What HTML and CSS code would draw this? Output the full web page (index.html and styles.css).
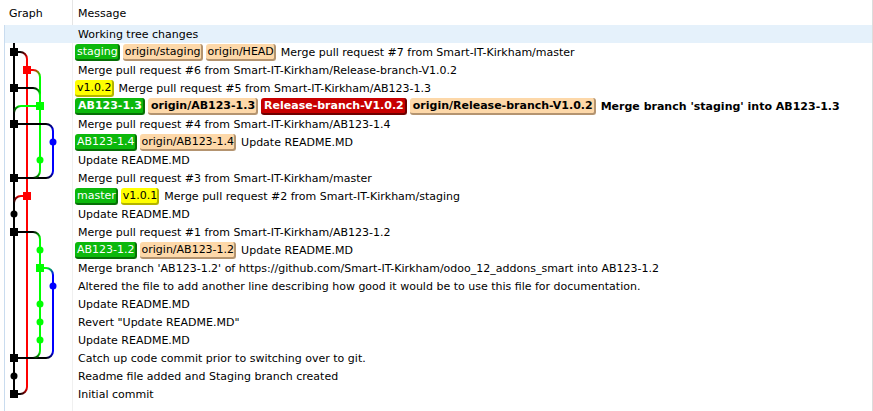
FILE: index.html
```html
<!DOCTYPE html>
<html>
<head>
<meta charset="utf-8">
<link rel="stylesheet" href="styles.css">
</head>
<body>
<div class="list">
  <div class="header">
    <div class="h-graph">Graph</div>
    <div class="h-msg">Message</div>
  </div>
  <div class="body">
    <div class="row selected"><span class="sel-msg">Working tree changes</span></div>
    <div class="grid">
      <div class="gcol">
        <svg class="graph" width="67" height="368" viewBox="0 0 67 368">
          <defs>
            <linearGradient id="gKR" x1="0" y1="0" x2="1" y2="1"><stop offset="0" stop-color="#000"/><stop offset="1" stop-color="#f00"/></linearGradient>
            <linearGradient id="gRG" x1="0" y1="0" x2="1" y2="1"><stop offset="0" stop-color="#f00"/><stop offset="1" stop-color="#0f0"/></linearGradient>
            <linearGradient id="gKG" x1="0" y1="0" x2="1" y2="1"><stop offset="0" stop-color="#000"/><stop offset="1" stop-color="#0f0"/></linearGradient>
            <linearGradient id="gKB" x1="0" y1="0" x2="1" y2="1"><stop offset="0" stop-color="#000"/><stop offset="1" stop-color="#00f"/></linearGradient>
            <linearGradient id="gGB" x1="0" y1="0" x2="1" y2="1"><stop offset="0" stop-color="#0f0"/><stop offset="1" stop-color="#00f"/></linearGradient>
            <linearGradient id="gGK" x1="1" y1="0" x2="0" y2="1"><stop offset="0" stop-color="#0f0"/><stop offset="1" stop-color="#000"/></linearGradient>
            <linearGradient id="gBK" x1="1" y1="0" x2="0" y2="1"><stop offset="0" stop-color="#00f"/><stop offset="1" stop-color="#000"/></linearGradient>
            <linearGradient id="gRK" x1="1" y1="0" x2="0" y2="1"><stop offset="0" stop-color="#f00"/><stop offset="1" stop-color="#000"/></linearGradient>
          </defs>
          <g transform="translate(-5 -43)" fill="none" stroke-width="2">
            <path d="M27 59 V387" stroke="#f00"/>
            <path d="M40 77 V171 M40 239 V351" stroke="#0f0"/>
            <path d="M53 131 V171 M53 275 V351" stroke="#00f"/>
            <path d="M14 43 V394" stroke="#000"/>
            <path d="M27 70 H33 M27 196 H21" stroke="#f00"/>
            <path d="M40 106 H21 M40 268 H46" stroke="#0f0"/>
            <path d="M14 52 H20 M14 88 H33 M14 124 H46 M14 178 H33 M33 178 H46 M14 232 H33 M14 358 H46 M14 394 H20" stroke="#000"/>
            <path d="M20 52 A7 7 0 0 1 27 59" stroke="url(#gKR)"/>
            <path d="M33 70 A7 7 0 0 1 40 77" stroke="url(#gRG)"/>
            <path d="M33 88 A7 7 0 0 1 40 95" stroke="url(#gKG)"/>
            <path d="M21 106 A7 7 0 0 0 14 113" stroke="url(#gGK)"/>
            <path d="M46 124 A7 7 0 0 1 53 131" stroke="url(#gKB)"/>
            <path d="M40 171 A7 7 0 0 1 33 178" stroke="url(#gGK)"/>
            <path d="M53 171 A7 7 0 0 1 46 178" stroke="url(#gBK)"/>
            <path d="M21 196 A7 7 0 0 0 14 203" stroke="url(#gRK)"/>
            <path d="M33 232 A7 7 0 0 1 40 239" stroke="url(#gKG)"/>
            <path d="M46 268 A7 7 0 0 1 53 275" stroke="url(#gGB)"/>
            <path d="M40 351 A7 7 0 0 1 33 358" stroke="url(#gGK)"/>
            <path d="M53 351 A7 7 0 0 1 46 358" stroke="url(#gBK)"/>
            <path d="M27 387 A7 7 0 0 1 20 394" stroke="url(#gRK)"/>
          </g>
          <g transform="translate(-5 -43)" stroke="none">
            <g fill="#000">
              <rect x="10" y="48" width="8" height="8"/>
              <rect x="10" y="84" width="8" height="8"/>
              <rect x="10" y="120" width="8" height="8"/>
              <rect x="10" y="174" width="8" height="8"/>
              <circle cx="14" cy="214" r="3.5"/>
              <rect x="10" y="228" width="8" height="8"/>
              <rect x="10" y="354" width="8" height="8"/>
              <circle cx="14" cy="376" r="3.5"/>
              <rect x="10" y="390" width="8" height="8"/>
            </g>
            <g fill="#f00">
              <rect x="23" y="66" width="8" height="8"/>
              <rect x="23" y="192" width="8" height="8"/>
            </g>
            <g fill="#0f0">
              <rect x="36" y="102" width="8" height="8"/>
              <circle cx="40" cy="160" r="3.5"/>
              <circle cx="40" cy="250" r="3.5"/>
              <rect x="36" y="264" width="8" height="8"/>
              <circle cx="40" cy="304" r="3.5"/>
              <circle cx="40" cy="322" r="3.5"/>
              <circle cx="40" cy="340" r="3.5"/>
            </g>
            <g fill="#00f">
              <circle cx="53" cy="142" r="3.5"/>
              <circle cx="53" cy="286" r="3.5"/>
            </g>
          </g>
        </svg>
      </div>
      <div class="mcol">
        <div class="row"><span class="badge b-green">staging</span><span class="badge b-orange">origin/staging</span><span class="badge b-orange">origin/HEAD</span><span class="msg">Merge pull request #7 from Smart-IT-Kirkham/master</span></div>
        <div class="row"><span class="msg">Merge pull request #6 from Smart-IT-Kirkham/Release-branch-V1.0.2</span></div>
        <div class="row"><span class="badge b-yellow">v1.0.2</span><span class="msg">Merge pull request #5 from Smart-IT-Kirkham/AB123-1.3</span></div>
        <div class="row bold"><span class="badge b-green">AB123-1.3</span><span class="badge b-orange">origin/AB123-1.3</span><span class="badge b-red">Release-branch-V1.0.2</span><span class="badge b-orange">origin/Release-branch-V1.0.2</span><span class="msg">Merge branch 'staging' into AB123-1.3</span></div>
        <div class="row"><span class="msg">Merge pull request #4 from Smart-IT-Kirkham/AB123-1.4</span></div>
        <div class="row"><span class="badge b-green">AB123-1.4</span><span class="badge b-orange">origin/AB123-1.4</span><span class="msg">Update README.MD</span></div>
        <div class="row"><span class="msg">Update README.MD</span></div>
        <div class="row"><span class="msg">Merge pull request #3 from Smart-IT-Kirkham/master</span></div>
        <div class="row"><span class="badge b-green">master</span><span class="badge b-yellow">v1.0.1</span><span class="msg">Merge pull request #2 from Smart-IT-Kirkham/staging</span></div>
        <div class="row"><span class="msg">Update README.MD</span></div>
        <div class="row"><span class="msg">Merge pull request #1 from Smart-IT-Kirkham/AB123-1.2</span></div>
        <div class="row"><span class="badge b-green">AB123-1.2</span><span class="badge b-orange">origin/AB123-1.2</span><span class="msg">Update README.MD</span></div>
        <div class="row"><span class="msg">Merge branch 'AB123-1.2' of https://github.com/Smart-IT-Kirkham/odoo_12_addons_smart into AB123-1.2</span></div>
        <div class="row"><span class="msg">Altered the file to add another line describing how good it would be to use this file for documentation.</span></div>
        <div class="row"><span class="msg">Update README.MD</span></div>
        <div class="row"><span class="msg">Revert "Update README.MD"</span></div>
        <div class="row"><span class="msg">Update README.MD</span></div>
        <div class="row"><span class="msg">Catch up code commit prior to switching over to git.</span></div>
        <div class="row"><span class="msg">Readme file added and Staging branch created</span></div>
        <div class="row"><span class="msg">Initial commit</span></div>
      </div>
    </div>
  </div>
</div>
</body>
</html>
```
FILE: styles.css
```css
html, body {
  margin: 0;
  padding: 0;
  background: #fff;
}

body {
  font-family: "DejaVu Sans", Verdana, sans-serif;
  font-size: 11px;
  color: #000;
}

.list {
  width: 873px;
  height: 411px;
  box-sizing: border-box;
  border-right: 1px solid #dcdcdc;
  overflow: hidden;
  display: flex;
  flex-direction: column;
}

.header {
  display: flex;
  height: 25px;
  flex: none;
  align-items: stretch;
}

.h-graph {
  width: 73px;
  box-sizing: border-box;
  padding: 7px 0 0 9px;
  border-right: 1px solid #e5e5e5;
}

.h-msg {
  padding: 7px 0 0 5px;
}

.body {
  flex: 1;
  margin-left: 4px;
  border-left: 1px solid #c9dcef;
  display: flex;
  flex-direction: column;
}

.row {
  height: 18px;
  line-height: 19px;
  display: flex;
  align-items: flex-start;
  white-space: nowrap;
}

.selected {
  background: #e5f1fb;
}

.sel-msg {
  padding-left: 73px;
}

.grid {
  flex: 1;
  display: grid;
  grid-template-columns: 68px 1fr;
}

.gcol {
  border-right: 1px solid #f0f0f0;
}

.graph {
  display: block;
}

.mcol {
  padding-left: 2px;
}

.bold {
  font-weight: bold;
}

.badge {
  display: block;
  height: 17px;
  margin: 1px 3px 0 0;
  padding: 0 0 0 2px;
  border-radius: 3px;
  border-right: 2px solid;
  border-bottom: 2px solid;
  line-height: 16px;
  box-sizing: border-box;
}

.bold .badge {
  padding: 0 1px 0 3px;
}

.msg {
  padding-left: 3px;
}

.row .badge ~ .msg {
  padding-left: 2px;
}

.b-green {
  background: #0cb80c;
  color: #fff;
  border-color: #067006;
}

.b-orange {
  background: #fdd8a9;
  color: #000;
  border-color: #b49470;
}

.b-yellow {
  background: #ffff00;
  color: #000;
  border-color: #b4b400;
}

.b-red {
  background: #c80000;
  color: #fff;
  border-color: #6e0000;
}
```
